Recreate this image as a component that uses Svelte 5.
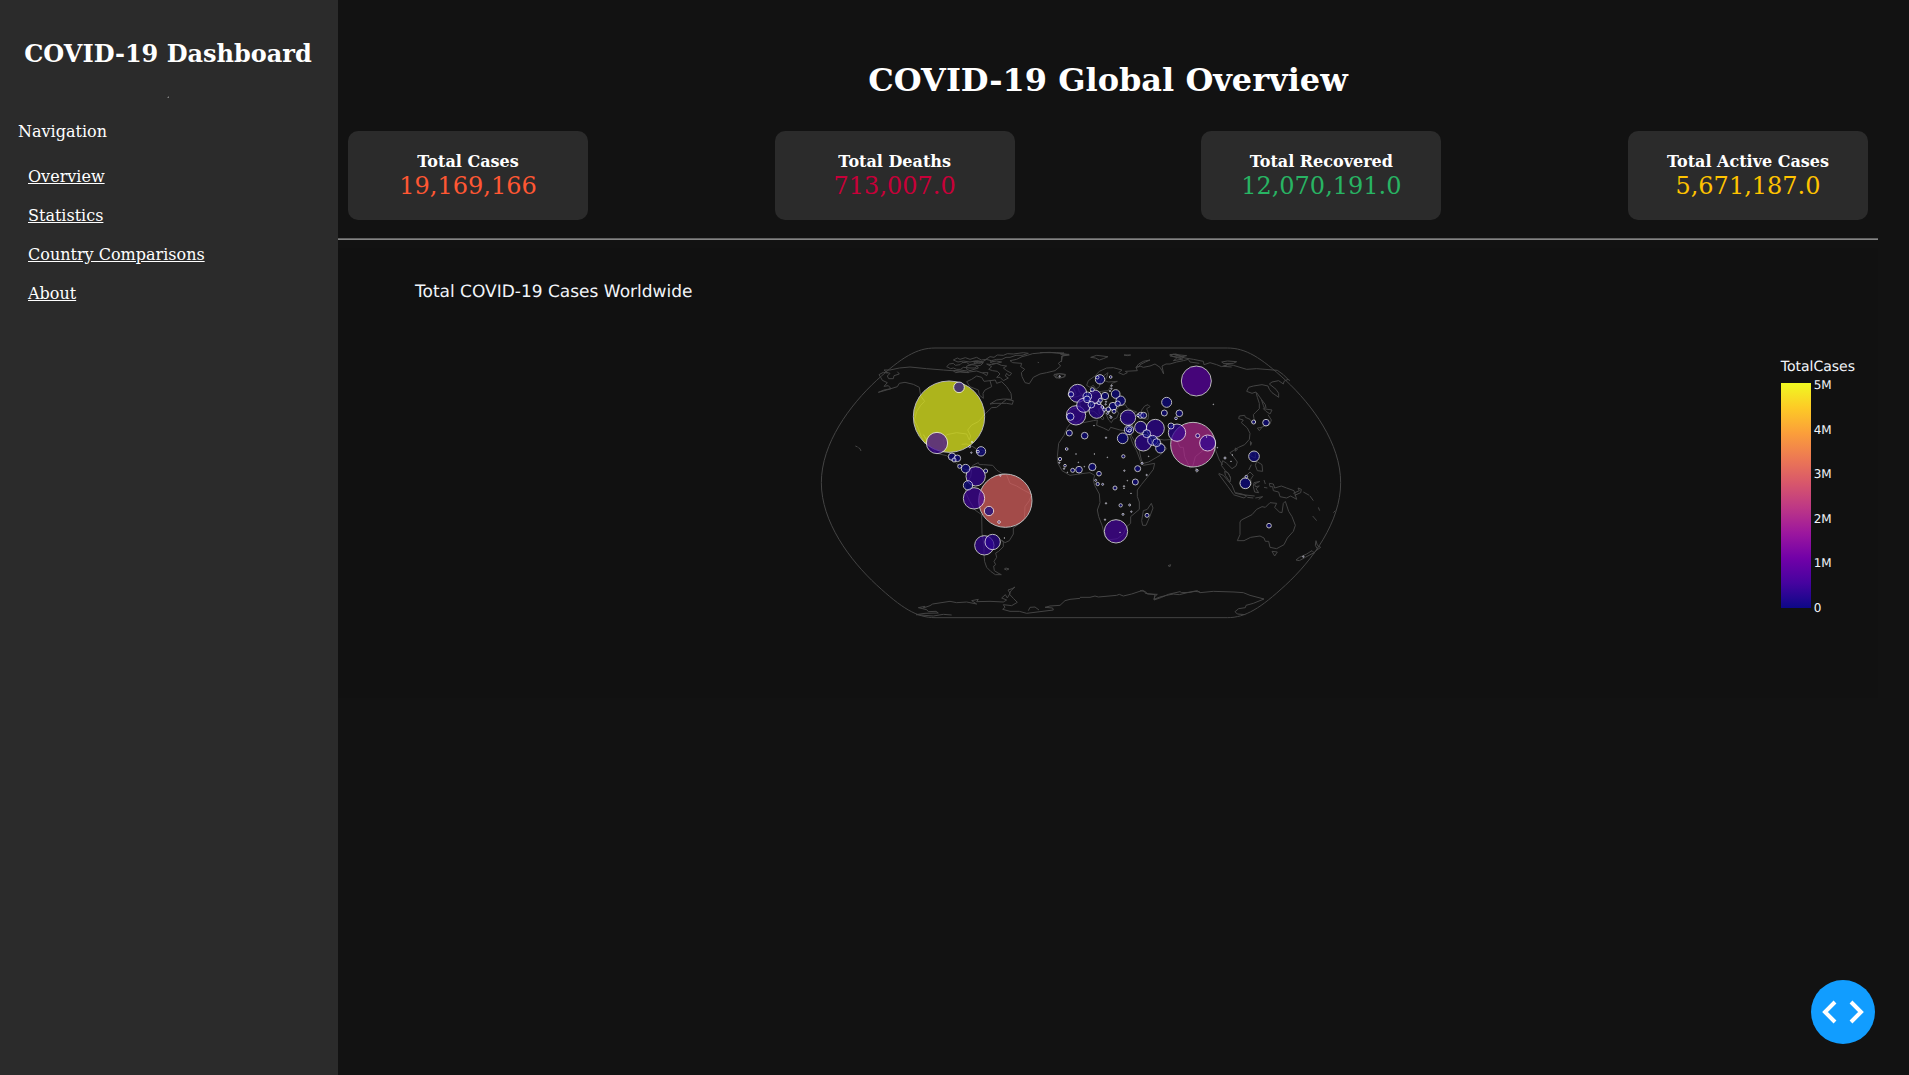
<script>
  const links = ['Overview', 'Statistics', 'Country Comparisons', 'About'];

  const cards = [
    { label: 'Total Cases', value: '19,169,166', tone: 'cases' },
    { label: 'Total Deaths', value: '713,007.0', tone: 'deaths' },
    { label: 'Total Recovered', value: '12,070,191.0', tone: 'recovered' },
    { label: 'Total Active Cases', value: '5,671,187.0', tone: 'active' }
  ];

  const ticks = ['5M', '4M', '3M', '2M', '1M', '0'];

  // Coastlines, grouped by region; each region has its own origin on the map.
  const coasts = [
    {
      x: 0, y: 0,
      lines: [
        'M205 157L222 150 243 146 235 137 222 139 232 128 217 121 212 112 207 104 220 97 232 99 222 90 240 90 268 84 300 81 350 86 400 90 440 93 470 97 500 93 520 100',
        'M230 97L240 100 232 108 236 116 250 116 252 107 268 102 262 95',
        'M205 157L230 150 262 140 268 130 285 127 310 133 328 142 332 168 344 184 332 196 320 215 313 240 325 265 333 288 345 312 350 300 340 284 350 300 365 325 380 340 410 347 425 358 440 370 450 382 470 390 482 384 490 375',
        'M405 335L400 300 410 284 440 278 470 282 478 300 482 288 473 270 485 255 505 245 520 228 527 220 545 203 560 202 575 190 590 190 607 193 610 182 590 178 575 190 555 190 540 192 560 180 580 177 605 178 603 160 590 140 575 125 560 130 556 120 540 122 545 140 525 150 519 160 520 175 508 165 505 150 480 140 470 125 485 118 500 108 515 112 522 124 540 122',
        'M410 80L418 72 430 70 436 76 450 74 456 68 470 67 478 74 490 72 505 66 520 68 512 76 500 78 496 84 480 84 460 82 452 88 440 88 430 84 422 86 410 80',
        'M430 60L442 54 450 58 466 53 480 58 500 52 514 60 530 58 518 65 500 62 480 66 460 63 444 66Z',
        'M470 78L486 74 500 76 505 84 480 92 470 88Z M430 92L450 90 472 93 476 98 450 96 436 98Z',
        'M528 58L540 50 552 52 562 45 580 46 592 41 610 42 640 38 655 40 636 46 618 46 600 52 588 52 576 58 560 58 544 62Z',
        'M530 72L545 74 560 70 574 76 590 78 580 84 590 92 605 100 598 108 590 100 586 108 595 114 580 122 570 112 560 112 570 102 562 94 548 92 536 88 545 80Z',
        'M540 66L560 63 575 66 560 70 548 70Z M490 64L520 66 512 70 494 69Z M518 98L534 98 530 107Z',
        'M600 62L620 58 636 50 652 46 668 41 700 38 740 38 762 39 752 43 777 43 757 48 755 62 745 70 752 78 735 92 710 98 690 102 670 112 658 131 645 128 636 110 634 98 644 88 632 80 635 70 608 68Z',
        'M683 67L687 68 M733 103L742 107 735 110 748 115 765 110 766 103 750 101Z',
        'M455 313L470 312 485 318 498 326 M497 333L508 328 524 333 512 340 498 336',
        'M136 318L143 321 M145 323L150 326 153 333',
        'M490 375L505 368 508 374 520 374 548 376 560 390 575 400 590 405 600 430 620 438 640 450 665 463 658 482 645 500 643 535 632 548 610 564 610 582 598 602 585 608 575 600'
      ]
    },
    {
      x: 0, y: 390,
      lines: [
        'M485 0L482 20 466 45 468 70 480 95 495 120 515 134 516 190 522 225 522 255 524 275 530 292 542 304 556 314 574 314 564 309 553 302 551 288 557 284 552 274 560 262 557 249 566 244 580 230 580 216 572 210',
        'M583 297L588 294 597 297 590 300Z',
        'M425 435L400 433 370 438 318 434 345 430 385 429 378 424 355 425 350 419 325 413 345 409 340 414 360 407 368 402 420 394 440 398 470 396 500 402 485 392 505 388 500 395 540 394 580 396 590 390 575 384 586 374 592 384 600 370 594 360 606 356 615 351 603 362 598 372 610 385 622 397 605 407 580 404 585 412 578 418 600 424 628 424 650 430 690 425 730 420 728 414 705 412 720 408 750 406 765 392 780 388 810 385',
        'M655 422L660 412 675 411 687 420'
      ]
    },
    {
      x: 690, y: 0,
      lines: [
        'M140 136L145 122 165 108 178 94 200 84 220 83 246 90 236 98 250 104 262 98 256 94 292 92 288 82 300 78 310 82 330 78 345 72 360 82 366 92 371 102 366 78 378 72 390 72 410 66 430 62 445 58 450 66 478 70',
        'M140 136L150 142 160 136 168 148 178 140 182 124 190 108 204 98 200 112 194 122 205 126 232 124 216 130 210 142 205 152 184 154 165 158 150 162 140 170 128 176 118 184 122 202 92 208 86 218 88 240 108 248 122 240 130 222 150 212 162 214 178 228 188 240 192 234 178 220 176 206 188 208 198 222 206 240 214 248 220 238 230 234',
        'M98 140L104 134 114 142 118 156 126 164 112 170 98 172 108 160Z M84 160L96 156 96 166 86 170Z',
        'M288 82L296 72 310 64 330 60 316 66 300 74 298 80Z',
        'M152 52L170 46 204 50 190 56 178 60 166 54Z M252 45L272 45 262 47Z M390 44L408 42 430 52 424 56 400 50Z',
        'M0 38L30 37 75 42 88 45 65 48 64 66 M41 105L58 101 76 104 70 112 48 114Z',
        'M230 234L236 220 230 210 238 198 256 194 262 204 274 210 290 216 276 220 252 216 240 222 M238 240L264 252 276 250 280 264 270 276',
        'M305 226L305 210 314 198 324 194 330 200 320 206 326 222 324 238 312 236 305 226',
        'M92 250L110 252 160 242 172 240 170 256 190 264 206 272 212 262 240 270 268 274 276 290 296 324 304 360 310 370 326 366 360 346 380 326 366 310 344 308 330 290 320 280 M266 276L278 310 290 332 302 364 310 376 344 370 340 388 322 412 304 434 292 450 292 470 298 486 298 508 272 530 272 550 260 560 250 582 232 596 204 600 196 592 186 556 176 530 172 510 180 488 178 462 164 436 160 420 164 406 150 398 132 400 90 406 66 392 54 370 52 350 56 310 72 286 82 262 92 250',
        'M334 490L339 504 330 528 318 556 308 556 305 542 310 512 322 508Z',
        'M350 296L372 300 400 298 M384 677L392 674 390 680Z'
      ]
    },
    {
      x: 690, y: 360,
      lines: [
        'M120 412L150 412 165 408 175 411 230 406 238 403 250 408 275 402 308 391 320 398 322 402 352 403 344 410 342 420 365 412 385 403 420 395 425 398 450 397 465 394 480 396'
      ]
    },
    {
      x: 990, y: 0,
      lines: [
        'M88 45L100 43 135 54 160 58 190 64 192 74 210 68 230 74 245 80 262 74 280 76 320 88 350 86 412 91 430 104 444 118 450 122',
        'M130 57L100 62 110 55 M90 48L120 52 140 47 100 43 M245 66L262 63 290 65 280 70 252 71Z M262 74L250 79 275 81',
        'M444 118L432 124 430 132 416 122 396 126 388 132 408 148 416 160 416 172 396 158 388 148 384 138 366 134 340 138 326 142 320 154 336 160 348 156 352 172 358 190 358 206 346 218 340 224 342 236 346 248 336 248 330 238 316 232 314 226 298 228 296 236 310 240 304 248 322 264 330 280 328 298 314 314 296 322 280 332 270 338 282 352 292 366 288 378 276 386 260 370 248 362 244 376 256 392 266 402 272 414',
        'M350 158L364 178 370 196 374 206 M364 178L376 194 378 204 M370 206L396 210 390 222 378 214Z M384 224L394 240 390 252 374 258 364 262 M352 264L366 262 358 272Z',
        'M110 300L120 322 130 322 134 350 150 384 158 380 166 350 196 326 214 322 226 328 238 360 248 374',
        'M168 384L176 392 170 398 166 392Z M331 304L335 308 332 316Z M286 324L292 328 286 334Z',
        'M334 336L346 338 346 354 332 348Z M350 364L366 374 368 394 352 392 346 376Z M326 390L334 374',
        'M236 400L250 406 276 436 286 460 306 464 344 468 M236 402L264 440 280 462 M254 394L264 398 272 414 270 426 256 406Z',
        'M302 420L318 408 330 396 340 406 332 418 334 432 326 444 306 444 300 430Z M342 428L360 424 344 432 346 440 358 438 348 446 356 458 344 456 340 440Z'
      ]
    },
    {
      x: 990, y: 390,
      lines: [
        'M286 68L306 72 320 78 312 84 280 74 M322 82L340 84 M346 84L368 80 356 88 M372 30L376 42 M372 52L382 54 M388 40L400 42 404 54 424 48 440 54 462 62 470 88 452 78 440 84 420 80 416 66 400 62 398 50 390 50Z',
        'M460 70L478 62 474 54 484 58 482 68 464 76 M490 66L508 76 M510 78L520 92 M535 112L539 122 M518 138L530 152 M580 128L586 122',
        'M300 156L304 150 336 134 350 118 366 110 376 112 390 98 410 100 404 112 418 126 426 128 430 100 436 94 446 124 456 140 466 166 460 184 442 204 432 224 410 236 390 232 386 214 376 214 372 204 360 198 332 202 312 212 292 212 300 194 300 174Z',
        'M396 244L412 246 404 258Z M528 212L532 226 542 232 528 242 520 252 M528 212L526 226 532 236 M516 242L522 248 496 262 478 272 468 270 478 262 500 252Z',
        'M0 362L14 364 16 370 45 374 42 388 60 381 80 376 100 372 118 374 150 366 172 362 180 368 220 364 282 366 310 368 330 376 372 387 340 400 318 406 316 413 296 416 285 425 292 432 316 434'
      ]
    }
  ];

  // Bubbles per region: [x, y, radius, fill]; the default fill marks the low end of the scale.
  const low = '#0d0887';
  const mid = '#2c0594';
  const bubbleSets = [
    {
      x: 0, y: 0,
      items: [
        [417, 230, 107, '#f0f921'], [447, 142, 16, '#220690'], [381, 309, 32, '#41049d'], [513, 334, 14], [504, 335, 4],
        [479, 320, 3], [484, 338, 2], [486, 306, 2], [426, 350, 11], [442, 355, 10], [432, 360, 6], [449, 379, 6],
        [467, 386, 13], [497, 409, 29, '#35049a'], [527, 393, 6], [749, 109, 2], [586, 482, 80, '#e16462'],
        [474, 436, 14], [492, 475, 32, '#41049d'], [537, 513, 14], [567, 546, 4], [523, 616, 29, '#35049a'],
        [548, 606, 23, mid], [583, 594, 1], [571, 407, 2]
      ]
    },
    {
      x: 690, y: 0,
      items: [
        [113, 160, 27, mid], [93, 163, 8], [108, 226, 29, '#35049a'], [91, 230, 11], [131, 196, 21, mid], [142, 169, 13],
        [141, 178, 10], [164, 170, 20, mid], [154, 194, 10], [170, 212, 23, mid], [180, 118, 14], [172, 112, 5],
        [212, 111, 4], [157, 149, 6], [195, 168, 11], [227, 162, 13], [242, 182, 14], [233, 191, 8], [219, 199, 12],
        [205, 208, 7], [222, 214, 6], [177, 188, 6], [181, 181, 6], [187, 201, 4], [193, 209, 5], [198, 185, 2],
        [197, 193, 2], [203, 220, 3], [207, 215, 2], [213, 232, 3], [210, 226, 1], [215, 137, 2], [214, 146, 2],
        [210, 153, 2], [264, 233, 23, mid], [302, 226, 9], [311, 226, 9], [294, 226, 4], [469, 123, 45, '#5c01a6'],
        [380, 187, 15], [373, 219, 9], [418, 220, 10], [408, 235, 4], [393, 258, 9], [411, 278, 26, mid],
        [459, 314, 67, '#b12a90'], [346, 265, 27, '#2f0596'], [302, 262, 18, '#220690'], [267, 270, 14], [267, 268, 8],
        [269, 272, 4], [248, 295, 16], [310, 308, 25, '#2f0596'], [320, 281, 12], [338, 301, 15], [350, 308, 12],
        [361, 325, 14], [473, 287, 6], [503, 309, 24, mid], [88, 279, 9], [134, 287, 10], [162, 257, 1], [198, 293, 2],
        [80, 327, 4], [108, 342, 1], [163, 342, 1], [202, 352, 1], [250, 349, 5], [326, 349, 1], [60, 357, 5],
        [58, 368, 2], [75, 377, 4], [72, 386, 2], [82, 397, 1], [115, 367, 1], [98, 391, 6], [117, 389, 10],
        [133, 380, 1], [157, 381, 11], [177, 401, 7], [253, 392, 2], [293, 386, 9], [306, 370, 3], [320, 405, 2],
        [286, 426, 9], [262, 422, 1], [225, 444, 6], [252, 439, 2], [252, 445, 1], [167, 421, 3], [173, 432, 5],
        [188, 433, 3], [273, 460, 1], [198, 490, 2], [242, 496, 5], [269, 495, 3], [274, 515, 2], [249, 523, 3],
        [195, 539, 2], [321, 526, 6], [228, 574, 35, '#46039f'], [240, 577, 1]
      ]
    },
    {
      x: 990, y: 0,
      items: [
        [220, 193, 1], [341, 246, 6], [378, 248, 10], [200, 291, 1], [232, 323, 1], [255, 354, 3], [277, 345, 1],
        [273, 364, 1], [342, 349, 16], [319, 410, 4], [316, 430, 16], [171, 391, 3], [387, 557, 7], [490, 650, 2]
      ]
    }
  ];

  const bubbles = bubbleSets
    .flatMap((set) => set.items.map(([x, y, r, fill = low]) => ({ x: x + set.x, y: y + set.y, r, fill })))
    .sort((a, b) => b.r - a.r);
</script>

<div class="app">
  <aside class="sidebar">
    <h2>COVID-19 Dashboard</h2>
    <hr class="dot" />
    <p>Navigation</p>
    <nav aria-label="Navigation">
      {#each links as link}
        <a href="#{link.toLowerCase().replace(' ', '-')}">{link}</a>
      {/each}
    </nav>
  </aside>

  <main>
    <h1>COVID-19 Global Overview</h1>
    <div class="cards">
      {#each cards as card}
        <section class="card">
          <strong>{card.label}</strong>
          <span class={card.tone}>{card.value}</span>
        </section>
      {/each}
    </div>
    <hr class="rule" />

    <section class="chart">
      <h3>Total COVID-19 Cases Worldwide</h3>
      <div class="plot">
        <div class="map">
          <svg viewBox="30 21 1566 819" role="img" aria-label="World map of total cases">
            <path
              class="frame"
              d="M375 24C320 24 275 52 200 121C120 195 34 310 34 428C34 546 120 661 200 735C275 804 320 833 375 833H1252C1307 833 1352 804 1427 735C1507 661 1592 546 1592 428C1592 310 1507 195 1427 121C1352 52 1307 24 1252 24Z"
            />
            {#each coasts as region}
              <g transform="translate({region.x} {region.y})">
                {#each region.lines as line}
                  <path class="coast" d={line} />
                {/each}
              </g>
            {/each}
            {#each bubbles as b}
              <circle cx={b.x} cy={b.y} r={b.r} fill={b.fill} />
            {/each}
          </svg>
        </div>
        <div class="legend">
          <span class="legend-title">TotalCases</span>
          <div class="scale">
            <div class="bar"></div>
            <div class="ticks">
              {#each ticks as tick}<span>{tick}</span>{/each}
            </div>
          </div>
        </div>
      </div>
    </section>
  </main>

  <button class="debug" aria-label="Toggle developer tools">
    <svg viewBox="0 0 64 64" aria-hidden="true">
      <path d="M24 22L14 32L24 42M40 22L50 32L40 42" />
    </svg>
  </button>
</div>

<style>
  :global(body) {
    margin: 0;
    background: #121212;
  }
  .app {
    display: flex;
    min-height: 100vh;
    font-family: 'DejaVu Serif', serif;
    font-size: 16px;
    line-height: 19px;
    color: #fff;
  }
  .sidebar {
    box-sizing: border-box;
    flex: 0 0 338px;
    display: flex;
    flex-direction: column;
    padding: 40px 20px 40px 18px;
    background: #2b2b2b;
  }
  h2 {
    margin: 0;
    font-size: 24px;
    line-height: 28px;
    text-align: center;
    white-space: nowrap;
  }
  .dot {
    width: 0;
    margin: 28px auto 24px;
    border: 1px inset #808080;
  }
  .sidebar p {
    margin: 0 0 16px;
  }
  nav {
    display: flex;
    flex-direction: column;
    align-items: flex-start;
  }
  nav a {
    padding: 10px;
    color: #fff;
  }
  main {
    flex: 1;
    min-width: 0;
    padding: 62px 31px 0 0;
  }
  h1 {
    margin: 0 0 32px;
    font-size: 32px;
    line-height: 37px;
    text-align: center;
  }
  .cards {
    display: flex;
    justify-content: space-between;
    padding: 0 10px 10px;
  }
  .card {
    box-sizing: border-box;
    width: 240px;
    display: flex;
    flex-direction: column;
    align-items: center;
    padding: 21px 20px 19px;
    border-radius: 10px;
    background: #2b2b2b;
  }
  .card span {
    font-size: 24px;
    line-height: 30px;
  }
  .cases { color: #ff5733; }
  .deaths { color: #c70039; }
  .recovered { color: #28b463; }
  .active { color: #ffc300; }
  .rule {
    margin: 8px 0;
    border: 0;
    border-top: 1px solid #606060;
    border-bottom: 1px solid #848484;
  }
  .chart {
    box-sizing: border-box;
    min-height: 450px;
    padding: 34px 23px 0 77px;
    background: #111;
    font-family: 'DejaVu Sans', sans-serif;
    color: #f2f5fa;
    text-rendering: geometricPrecision;
  }
  h3 {
    margin: 0 0 45px;
    font-size: 17px;
    font-weight: 400;
    line-height: 20px;
  }
  .plot {
    display: flex;
    align-items: flex-start;
    gap: 34px;
  }
  .map {
    flex: 1;
    display: flex;
    justify-content: center;
  }
  .map svg {
    width: 100%;
    max-width: 522px;
  }
  .frame,
  .coast {
    fill: none;
    stroke: #444;
    stroke-width: 3;
    stroke-linejoin: round;
  }
  circle {
    stroke: #fff;
    stroke-width: 3;
    opacity: 0.7;
  }
  .legend {
    display: flex;
    flex-direction: column;
    gap: 7px;
    padding-top: 12px;
  }
  .legend-title {
    font-size: 14px;
    line-height: 17px;
  }
  .scale {
    display: flex;
    gap: 3px;
    height: 225px;
  }
  .bar {
    width: 30px;
    background: linear-gradient(to top, #0d0887, #46039f, #7201a8, #9c179e, #bd3786, #d8576b, #ed7953, #fb9f3a, #fdca26, #f0f921);
  }
  .ticks {
    display: flex;
    flex-direction: column;
    justify-content: space-between;
    margin: -5px 0 -7px;
    font-size: 12px;
    line-height: 14px;
  }
  .debug {
    position: fixed;
    right: 34px;
    bottom: 31px;
    width: 64px;
    height: 64px;
    padding: 0;
    border: 0;
    border-radius: 50%;
    background: #119dff;
    cursor: pointer;
  }
  .debug svg {
    display: block;
  }
  .debug path {
    fill: none;
    stroke: #fff;
    stroke-width: 4;
  }
</style>
